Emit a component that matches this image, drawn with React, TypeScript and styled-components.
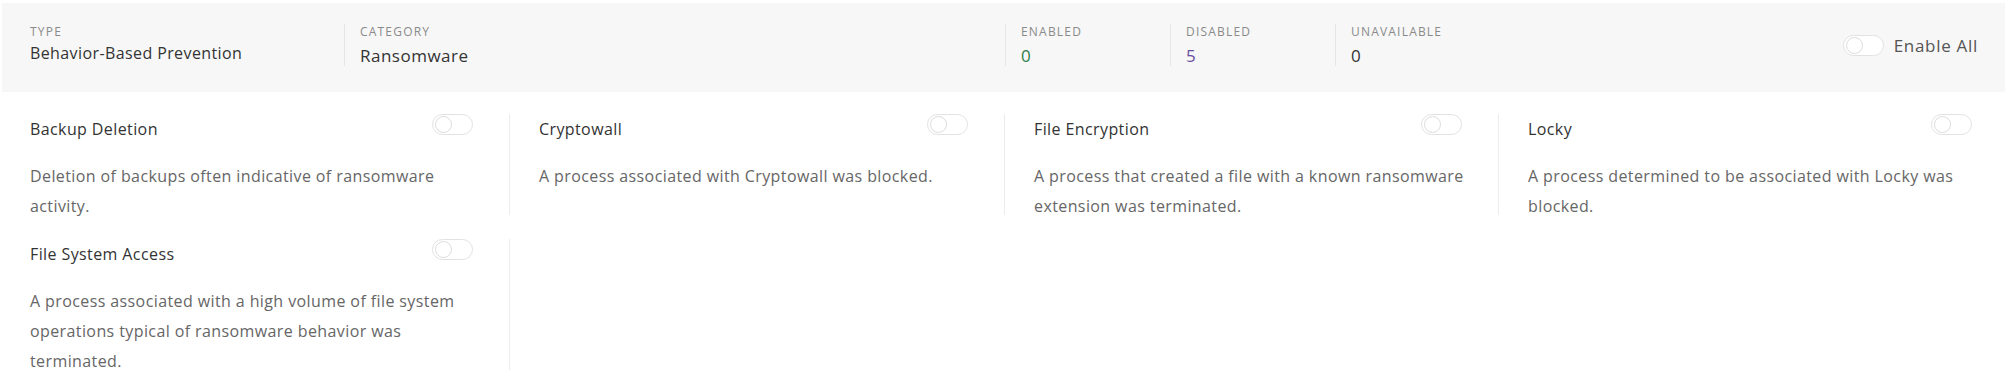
import React from "react";
import styled, { createGlobalStyle } from "styled-components";

const GlobalStyle = createGlobalStyle`
  body {
    margin: 0;
    background: #ffffff;
    font-family: "Open Sans", "Liberation Sans", sans-serif;
    color: #333333;
  }
`;

const Page = styled.div`
  width: 2009px;
`;

const Header = styled.div`
  margin: 3px 4px 0 2px;
  height: 89px;
  background: #f7f7f7;
  display: flex;
  align-items: flex-start;
  padding: 21px 27px 0 28px;
  box-sizing: border-box;
`;

const Field = styled.div<{ $width?: number; $divider?: boolean }>`
  box-sizing: border-box;
  height: 42px;
  padding-left: ${(p) => (p.$divider ? "15px" : "0")};
  border-left: ${(p) => (p.$divider ? "1px solid #e6e6e6" : "none")};
  width: ${(p) => (p.$width ? `${p.$width}px` : "auto")};
  flex: ${(p) => (p.$width ? "none" : "1")};
`;

const Label = styled.div`
  font-size: 12px;
  line-height: 16px;
  letter-spacing: 1.2px;
  text-transform: uppercase;
  color: #8a8a8a;
`;

const Value = styled.div<{ $color?: string; $large?: boolean }>`
  font-size: ${(p) => (p.$large ? "17px" : "16px")};
  line-height: 26px;
  margin-top: ${(p) => (p.$large ? "3px" : "0")};
  letter-spacing: ${(p) => (p.$large ? "0.5px" : "0.4px")};
  color: ${(p) => p.$color || "#333333"};
`;

const EnableAll = styled.label`
  display: flex;
  align-items: center;
  gap: 10px;
  margin-top: 10px;
  font-size: 17px;
  line-height: 23px;
  letter-spacing: 0.7px;
  color: #555555;
`;

const Switch = styled.span`
  display: inline-block;
  position: relative;
  width: 41px;
  height: 21px;
  box-sizing: border-box;
  border: 1px solid #e2e2e2;
  border-radius: 11px;
  background: #ffffff;
  flex: none;

  &::after {
    content: "";
    position: absolute;
    left: 2px;
    top: 1px;
    width: 17px;
    height: 17px;
    box-sizing: border-box;
    border-radius: 50%;
    border: 1px solid #dcdcdc;
    background: #ffffff;
  }
`;

const Grid = styled.div`
  display: grid;
  grid-template-columns: 509px 495px 494px 509px;
  row-gap: 24px;
  margin: 22px 0 0 1px;
`;

const Card = styled.div<{ $last?: boolean }>`
  box-sizing: border-box;
  padding: 0 36px 0 29px;
  border-right: ${(p) => (p.$last ? "none" : "1px solid #ececec")};
`;

const CardHead = styled.div`
  display: flex;
  justify-content: space-between;
  align-items: flex-start;
`;

const Title = styled.div`
  font-size: 16px;
  line-height: 30px;
  letter-spacing: 0.4px;
  color: #333333;
`;

const Description = styled.p`
  margin: 17px -8px -6px 0;
  font-size: 16px;
  line-height: 30px;
  letter-spacing: 0.4px;
  color: #666666;
`;

const rules = [
  {
    title: "Backup Deletion",
    text: "Deletion of backups often indicative of ransomware activity.",
  },
  {
    title: "Cryptowall",
    text: "A process associated with Cryptowall was blocked.",
  },
  {
    title: "File Encryption",
    text: "A process that created a file with a known ransomware extension was terminated.",
  },
  {
    title: "Locky",
    text: "A process determined to be associated with Locky was blocked.",
  },
  {
    title: "File System Access",
    text: "A process associated with a high volume of file system operations typical of ransomware behavior was terminated.",
  },
];

export default function App() {
  return (
    <Page>
      <GlobalStyle />
      <Header>
        <Field $width={314}>
          <Label>Type</Label>
          <Value>Behavior-Based Prevention</Value>
        </Field>
        <Field $width={661} $divider>
          <Label>Category</Label>
          <Value $large>Ransomware</Value>
        </Field>
        <Field $width={165} $divider>
          <Label>Enabled</Label>
          <Value $large $color="#2f7d4a">0</Value>
        </Field>
        <Field $width={165} $divider>
          <Label>Disabled</Label>
          <Value $large $color="#6a4f9e">5</Value>
        </Field>
        <Field $divider>
          <Label>Unavailable</Label>
          <Value $large>0</Value>
        </Field>
        <EnableAll>
          <Switch />
          Enable All
        </EnableAll>
      </Header>
      <Grid>
        {rules.map((r, i) => (
          <Card key={r.title} $last={i === 3}>
            <CardHead>
              <Title>{r.title}</Title>
              <Switch />
            </CardHead>
            <Description>{r.text}</Description>
          </Card>
        ))}
      </Grid>
    </Page>
  );
}
